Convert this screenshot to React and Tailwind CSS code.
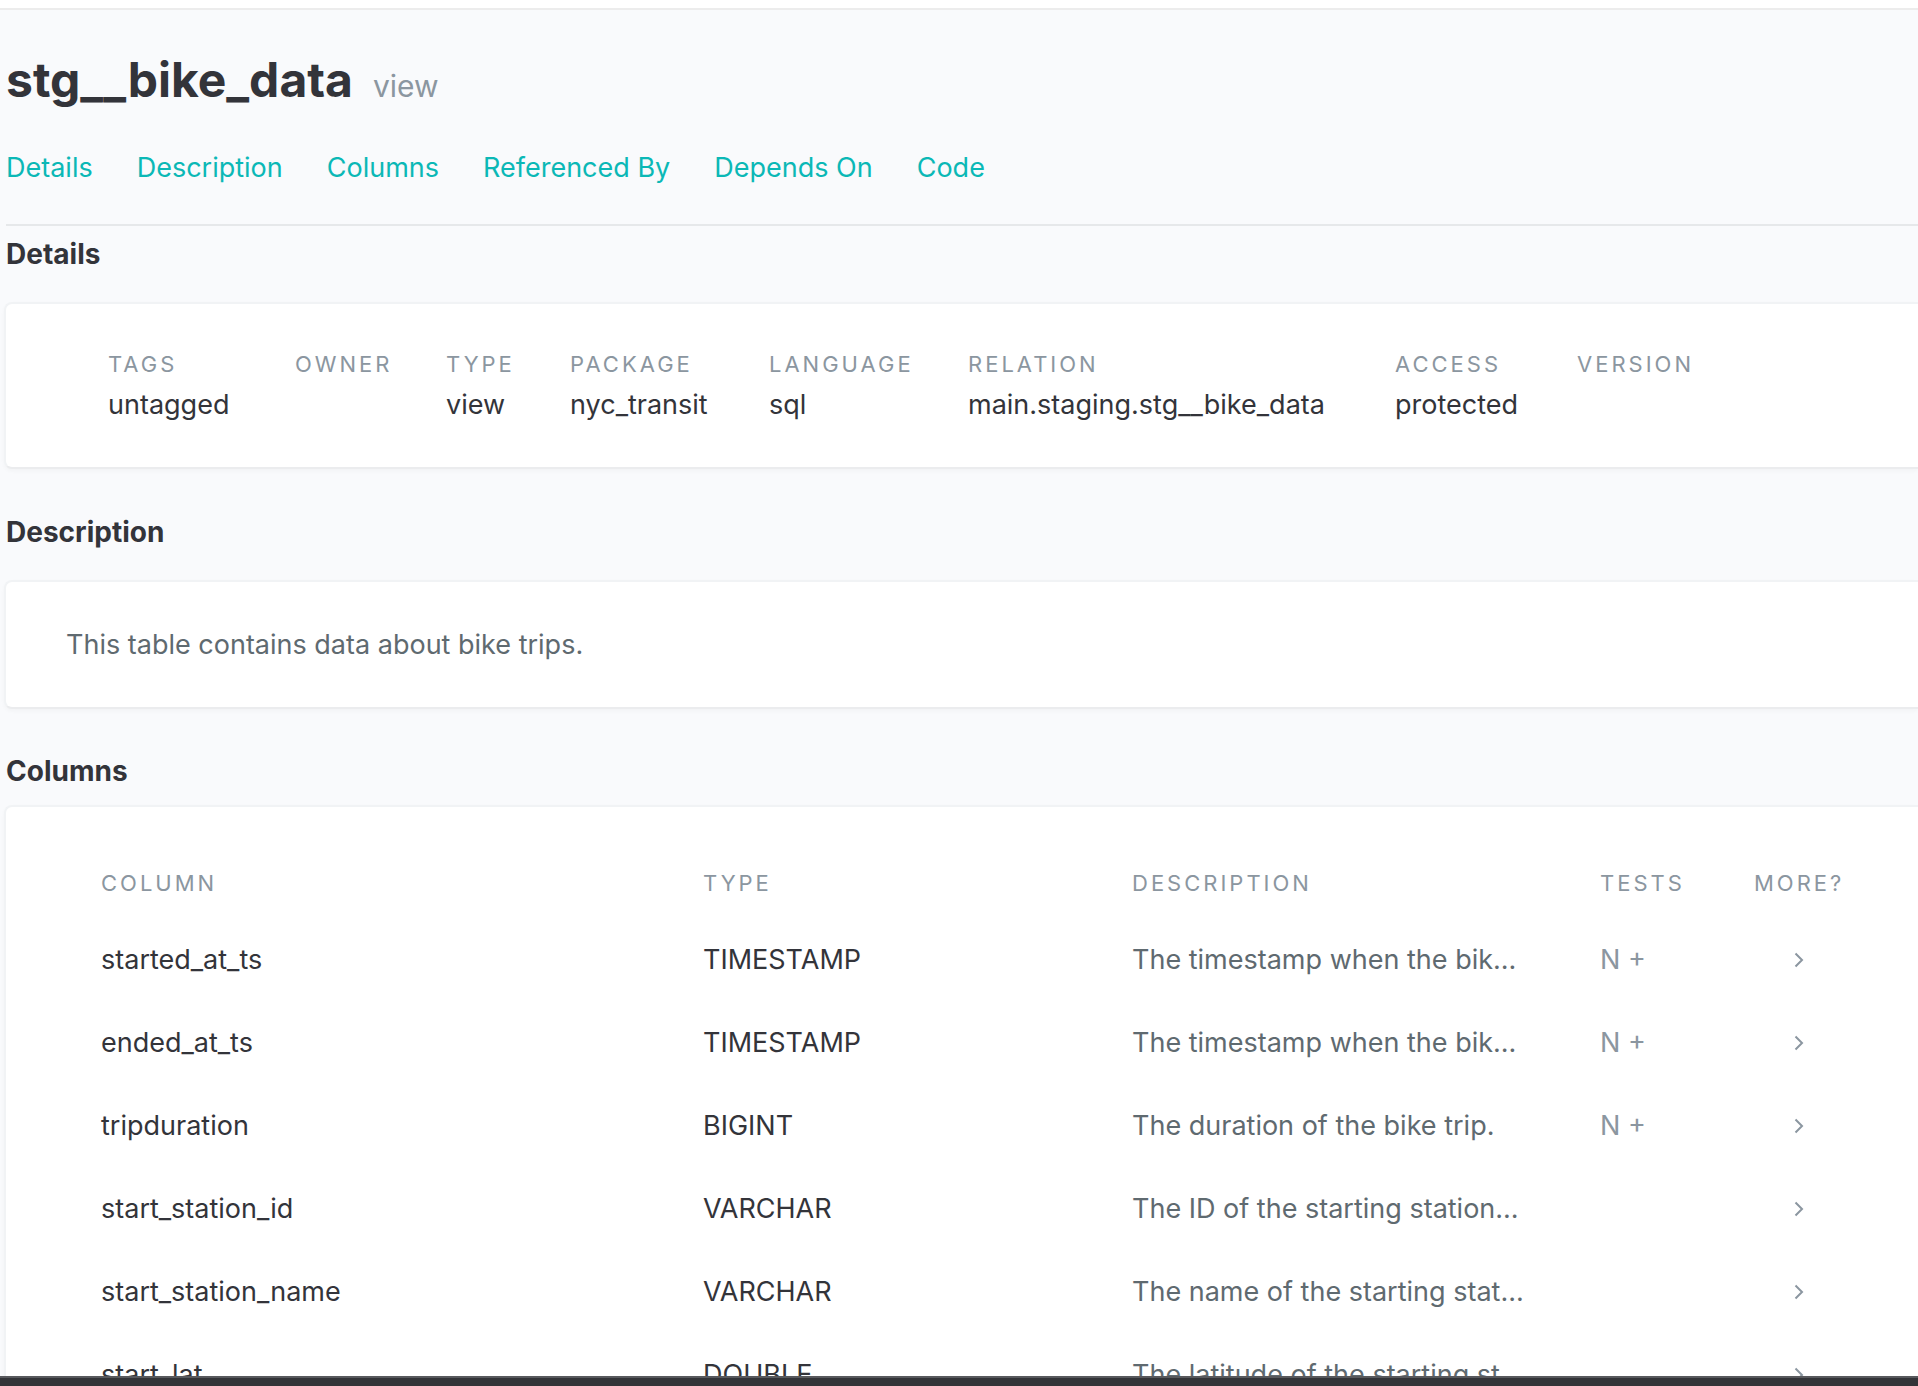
const navItems = ["Details", "Description", "Columns", "Referenced By", "Depends On", "Code"];

const details = [
  ["Tags", "untagged"],
  ["Owner", ""],
  ["Type", "view"],
  ["Package", "nyc_transit"],
  ["Language", "sql"],
  ["Relation", "main.staging.stg__bike_data"],
  ["Access", "protected"],
  ["Version", ""],
];

const columns = [
  ["started_at_ts", "TIMESTAMP", "The timestamp when the bik...", "N +"],
  ["ended_at_ts", "TIMESTAMP", "The timestamp when the bik...", "N +"],
  ["tripduration", "BIGINT", "The duration of the bike trip.", "N +"],
  ["start_station_id", "VARCHAR", "The ID of the starting station...", ""],
  ["start_station_name", "VARCHAR", "The name of the starting stat...", ""],
  ["start_lat", "DOUBLE", "The latitude of the starting st...", ""],
];

const anchor = (name) => "#" + name.toLowerCase().replace(" ", "_");

function Card({ className = "", children }) {
  return (
    <div
      className={
        "-ml-0.5 rounded-l-lg border-y-2 border-l-2 border-[#f1f3f5] border-b-[#ebecee] bg-white shadow-[0_2px_4px_rgba(0,0,0,0.03)] " +
        className
      }
    >
      {children}
    </div>
  );
}

function Heading({ id, children }) {
  return (
    <h2 id={id} className="text-[28px] leading-8 font-bold">
      {children}
    </h2>
  );
}

function Chevron() {
  return (
    <svg width="14" height="18" viewBox="0 0 14 18" fill="none" stroke="currentColor" strokeWidth="2" aria-hidden="true">
      <path d="M3.5 2.5 10 9l-6.5 6.5" />
    </svg>
  );
}

export default function App() {
  return (
    <div className="flex h-screen flex-col bg-[#f9fafc] font-['Inter',sans-serif] text-[27px] leading-8 text-[#33343a]">
      <div className="h-2.5 shrink-0 border-b-2 border-[#ececec] bg-white" />
      <main className="min-h-0 flex-1 overflow-hidden pl-1.5">
        <header className="border-b-2 border-[#e6e8ea] pt-10 pb-10">
          <h1 className="flex items-baseline gap-5 text-[48px] leading-[60px] font-bold">
            stg__bike_data
            <small className="text-[30px] font-normal text-[#8b96a0]">view</small>
          </h1>
          <nav className="mt-9 flex gap-11">
            {navItems.map((item) => (
              <a key={item} href={anchor(item)} className="text-[#0bb8b6]">
                {item}
              </a>
            ))}
          </nav>
        </header>

        <section className="pt-3">
          <Heading id="details">Details</Heading>
          <Card className="mt-8 py-[46px] pl-[102px]">
            <dl className="grid grid-cols-[187px_151px_124px_199px_199px_427px_182px_auto]">
              {details.map(([label, value]) => (
                <div key={label}>
                  <dt className="text-[22px] leading-7 tracking-[3px] text-[#8b96a0] uppercase">{label}</dt>
                  <dd className="mt-[11px] min-h-8">{value}</dd>
                </div>
              ))}
            </dl>
          </Card>
        </section>

        <section className="pt-[47px]">
          <Heading id="description">Description</Heading>
          <Card className="mt-8 pt-[47px] pb-[46px] pl-[60px]">
            <p className="text-[#5f6a70]">This table contains data about bike trips.</p>
          </Card>
        </section>

        <section className="pt-[46px]">
          <Heading id="columns">Columns</Heading>
          <Card className="mt-[18px] pt-[62px] pr-[74px] pl-[95px]">
            <table className="w-full table-fixed text-left">
              <thead>
                <tr className="text-[22px] leading-7 tracking-[3px] text-[#8b96a0] uppercase">
                  <th className="w-[602px] pb-[21px] font-normal">Column</th>
                  <th className="w-[429px] pb-[21px] font-normal">Type</th>
                  <th className="pb-[21px] font-normal">Description</th>
                  <th className="w-[154px] pb-[21px] font-normal">Tests</th>
                  <th className="w-[90px] pb-[21px] font-normal">More?</th>
                </tr>
              </thead>
              <tbody>
                {columns.map(([name, type, description, tests]) => (
                  <tr key={name} className="h-[83px]">
                    <td>{name}</td>
                    <td>{type}</td>
                    <td className="whitespace-nowrap text-[#5f6a70]">{description}</td>
                    <td className="text-[#8b96a0]">{tests}</td>
                    <td className="text-[#8b96a0]">
                      <button type="button" aria-label={"Show more about " + name} className="flex w-full justify-center">
                        <Chevron />
                      </button>
                    </td>
                  </tr>
                ))}
              </tbody>
            </table>
          </Card>
        </section>
      </main>
      <footer className="h-2.5 shrink-0 border-t-2 border-[#58595d] bg-[#333438]" />
    </div>
  );
}
